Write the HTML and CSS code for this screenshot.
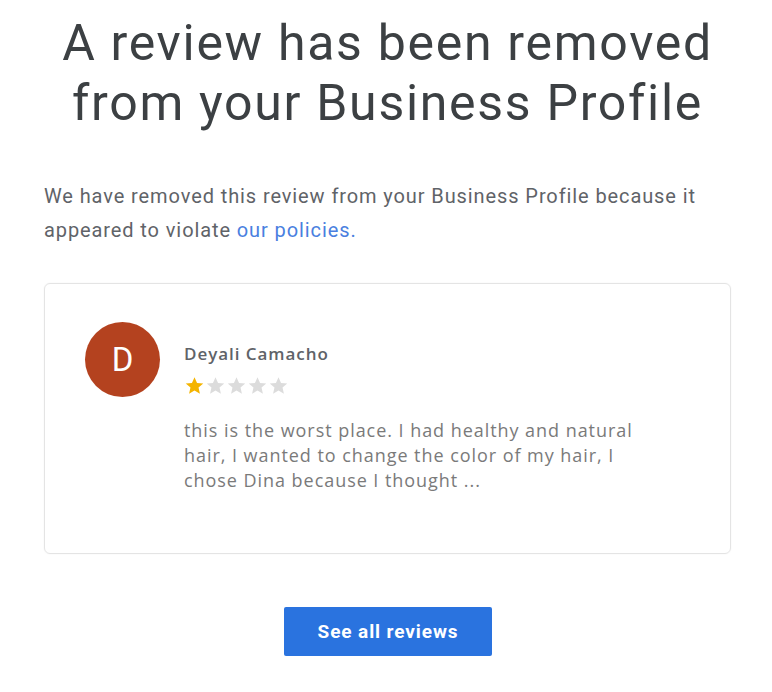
FILE: index.html
```html
<!DOCTYPE html>
<html>
<head>
<meta charset="utf-8">
<link rel="stylesheet" href="styles.css">
</head>
<body>
<main class="page">
  <h1 class="title">A review has been removed<br>from your Business Profile</h1>
  <p class="intro">We have removed this review from your Business Profile because it appeared to violate <a class="link" href="#">our policies.</a></p>
  <section class="card">
    <div class="avatar">D</div>
    <div class="review">
      <div class="name">Deyali Camacho</div>
      <div class="stars">
        <svg class="star on" viewBox="0 0 24 24"><path d="M12 2.5l2.9 6.6 7.1.6-5.4 4.7 1.6 7-6.2-3.7-6.2 3.7 1.6-7L2 9.7l7.1-.6z"/></svg>
        <svg class="star" viewBox="0 0 24 24"><path d="M12 2.5l2.9 6.6 7.1.6-5.4 4.7 1.6 7-6.2-3.7-6.2 3.7 1.6-7L2 9.7l7.1-.6z"/></svg>
        <svg class="star" viewBox="0 0 24 24"><path d="M12 2.5l2.9 6.6 7.1.6-5.4 4.7 1.6 7-6.2-3.7-6.2 3.7 1.6-7L2 9.7l7.1-.6z"/></svg>
        <svg class="star" viewBox="0 0 24 24"><path d="M12 2.5l2.9 6.6 7.1.6-5.4 4.7 1.6 7-6.2-3.7-6.2 3.7 1.6-7L2 9.7l7.1-.6z"/></svg>
        <svg class="star" viewBox="0 0 24 24"><path d="M12 2.5l2.9 6.6 7.1.6-5.4 4.7 1.6 7-6.2-3.7-6.2 3.7 1.6-7L2 9.7l7.1-.6z"/></svg>
      </div>
      <p class="text">this is the worst place. I had healthy and natural hair, I wanted to change the color of my hair, I chose Dina because I thought ...</p>
    </div>
  </section>
  <div class="actions"><a class="button" href="#">See all reviews</a></div>
</main>
</body>
</html>
```
FILE: styles.css
```css
html, body { margin: 0; padding: 0; background: #fff; }
.page { width: 772px; height: 692px; box-sizing: border-box; padding: 13px 41px 0 44px; }
.title {
  margin: 0;
  text-align: center;
  font-family: Roboto, "Liberation Sans", sans-serif;
  font-weight: 400;
  font-size: 50px;
  line-height: 60px;
  color: #3c4043;
  letter-spacing: 1.7px;
}
.intro {
  margin: 46px 0 0;
  font-family: Roboto, "Liberation Sans", sans-serif;
  font-size: 20px;
  line-height: 34px;
  color: #5f6368;
  letter-spacing: 0.9px;
}
.link { color: #4a7fe0; text-decoration: none; }
.card {
  margin-top: 36px;
  height: 271px;
  box-sizing: border-box;
  border: 1px solid #e4e4e4;
  border-radius: 6px;
  box-shadow: 0 0 2px rgba(0,0,0,0.06);
  display: flex;
  gap: 24px;
  padding: 38px 40px 0 40px;
}
.avatar {
  flex: none;
  width: 75px;
  height: 75px;
  border-radius: 50%;
  background: #b4421f;
  color: #fff;
  font-family: Roboto, "Liberation Sans", sans-serif;
  font-size: 33px;
  display: flex;
  align-items: center;
  justify-content: center;
}
.review { padding-top: 20px; font-family: "Open Sans", "Noto Sans", sans-serif; }
.name { font-size: 17px; font-weight: 600; color: #5f6368; line-height: 24px; letter-spacing: 0.95px; }
.stars { display: flex; gap: 0; margin-top: 9px; }
.star { width: 21px; height: 21px; fill: #dcdcdc; }
.star.on { fill: #f4b400; }
.text {
  margin: 22px 0 0;
  width: 480px;
  font-size: 18px;
  line-height: 25px;
  color: #7a7a7a;
  letter-spacing: 0.95px;
}
.actions { display: flex; justify-content: center; margin-top: 53px; padding-left: 1px; }
.button {
  width: 208px;
  height: 49px;
  background: #2a73df;
  color: #fff;
  font-family: Roboto, "Liberation Sans", sans-serif;
  font-weight: 700;
  font-size: 19px;
  letter-spacing: 0.9px;
  text-decoration: none;
  display: flex;
  align-items: center;
  justify-content: center;
  border-radius: 2px;
}
```
